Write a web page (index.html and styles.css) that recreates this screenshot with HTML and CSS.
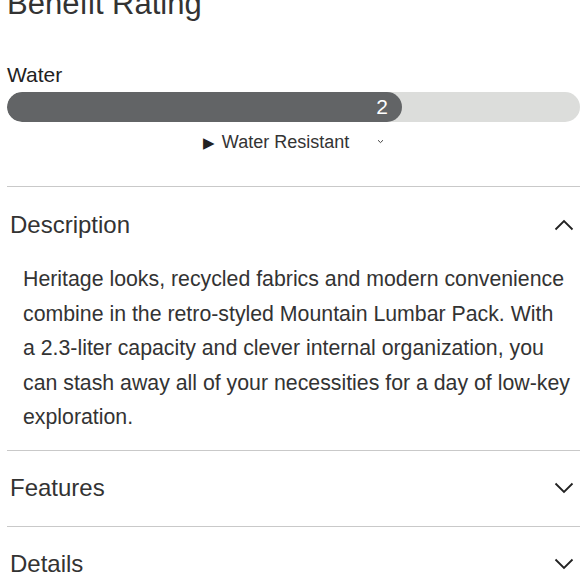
FILE: index.html
```html
<!DOCTYPE html>
<html>
<head>
<meta charset="utf-8">
<link rel="stylesheet" href="styles.css">
</head>
<body>
<div class="page">
  <h1 class="title">Benefit Rating</h1>
  <div class="rating">
    <div class="rating-label">Water</div>
    <div class="bar">
      <div class="bar-fill" style="width:395px"><span class="bar-value">2</span></div>
    </div>
    <div class="rating-toggle">
      <span class="tri">&#9654;</span>
      <span class="toggle-text">Water Resistant</span>
      <svg class="mini-caret" width="7" height="5" viewBox="0 0 7 5"><path d="M1 1.2 L3.5 3.6 L6 1.2" fill="none" stroke="#444" stroke-width="1"/></svg>
    </div>
  </div>
  <div class="section open">
    <div class="section-head">
      <span class="section-title">Description</span>
      <svg class="chev" width="20" height="12" viewBox="0 0 20 12"><path d="M1.5 10.5 L10 2 L18.5 10.5" fill="none" stroke="#222" stroke-width="1.8"/></svg>
    </div>
    <p class="section-body">Heritage looks, recycled fabrics and modern convenience<br>combine in the retro-styled Mountain Lumbar Pack. With<br>a 2.3-liter capacity and clever internal organization, you<br>can stash away all of your necessities for a day of low-key<br>exploration.</p>
  </div>
  <div class="section">
    <div class="section-head">
      <span class="section-title">Features</span>
      <svg class="chev" width="20" height="12" viewBox="0 0 20 12"><path d="M1.5 1.5 L10 10 L18.5 1.5" fill="none" stroke="#222" stroke-width="1.8"/></svg>
    </div>
  </div>
  <div class="section">
    <div class="section-head">
      <span class="section-title">Details</span>
      <svg class="chev" width="20" height="12" viewBox="0 0 20 12"><path d="M1.5 1.5 L10 10 L18.5 1.5" fill="none" stroke="#222" stroke-width="1.8"/></svg>
    </div>
  </div>
</div>
</body>
</html>
```
FILE: styles.css
```css
html, body {
  margin: 0;
  padding: 0;
  background: #fff;
  overflow: hidden;
}
body {
  font-family: "Liberation Sans", Arial, sans-serif;
  color: #2e2e2e;
}
.page {
  padding-left: 7px;
}
.title {
  margin: -14px 0 0 0;
  font-size: 31px;
  line-height: 36px;
  font-weight: normal;
  color: #333;
}
.rating {
  margin-top: 41px;
}
.rating-label {
  font-size: 21px;
  line-height: 24px;
  color: #222;
}
.bar {
  margin-top: 5px;
  height: 30px;
  border-radius: 15px;
  background: #dcdddb;
  display: flex;
  overflow: hidden;
}
.bar-fill {
  height: 30px;
  border-radius: 15px;
  background: #626466;
  display: flex;
  align-items: center;
  justify-content: flex-end;
  box-sizing: border-box;
  padding-right: 14px;
}
.bar-value {
  color: #fff;
  font-size: 21px;
  line-height: 24px;
}
.rating-toggle {
  height: 41px;
  display: flex;
  align-items: center;
  justify-content: center;
  font-size: 18px;
  color: #333;
}
.tri {
  font-size: 15px;
  margin-right: 7px;
  color: #222;
}
.mini-caret {
  margin-left: 28px;
  margin-top: -2px;
}
.section {
  border-top: 1px solid #c9c9c9;
}
.rating + .section {
  margin-top: 23px;
}
.section-head {
  height: 75px;
  display: flex;
  align-items: center;
  justify-content: space-between;
  padding-left: 3px;
  padding-right: 6px;
}
.section-title {
  font-size: 24px;
  color: #333;
}
.section-body {
  margin: 0;
  padding: 0 0 15px 16px;
  font-size: 21.3px;
  line-height: 34.5px;
  color: #333;
  white-space: nowrap;
}
```
